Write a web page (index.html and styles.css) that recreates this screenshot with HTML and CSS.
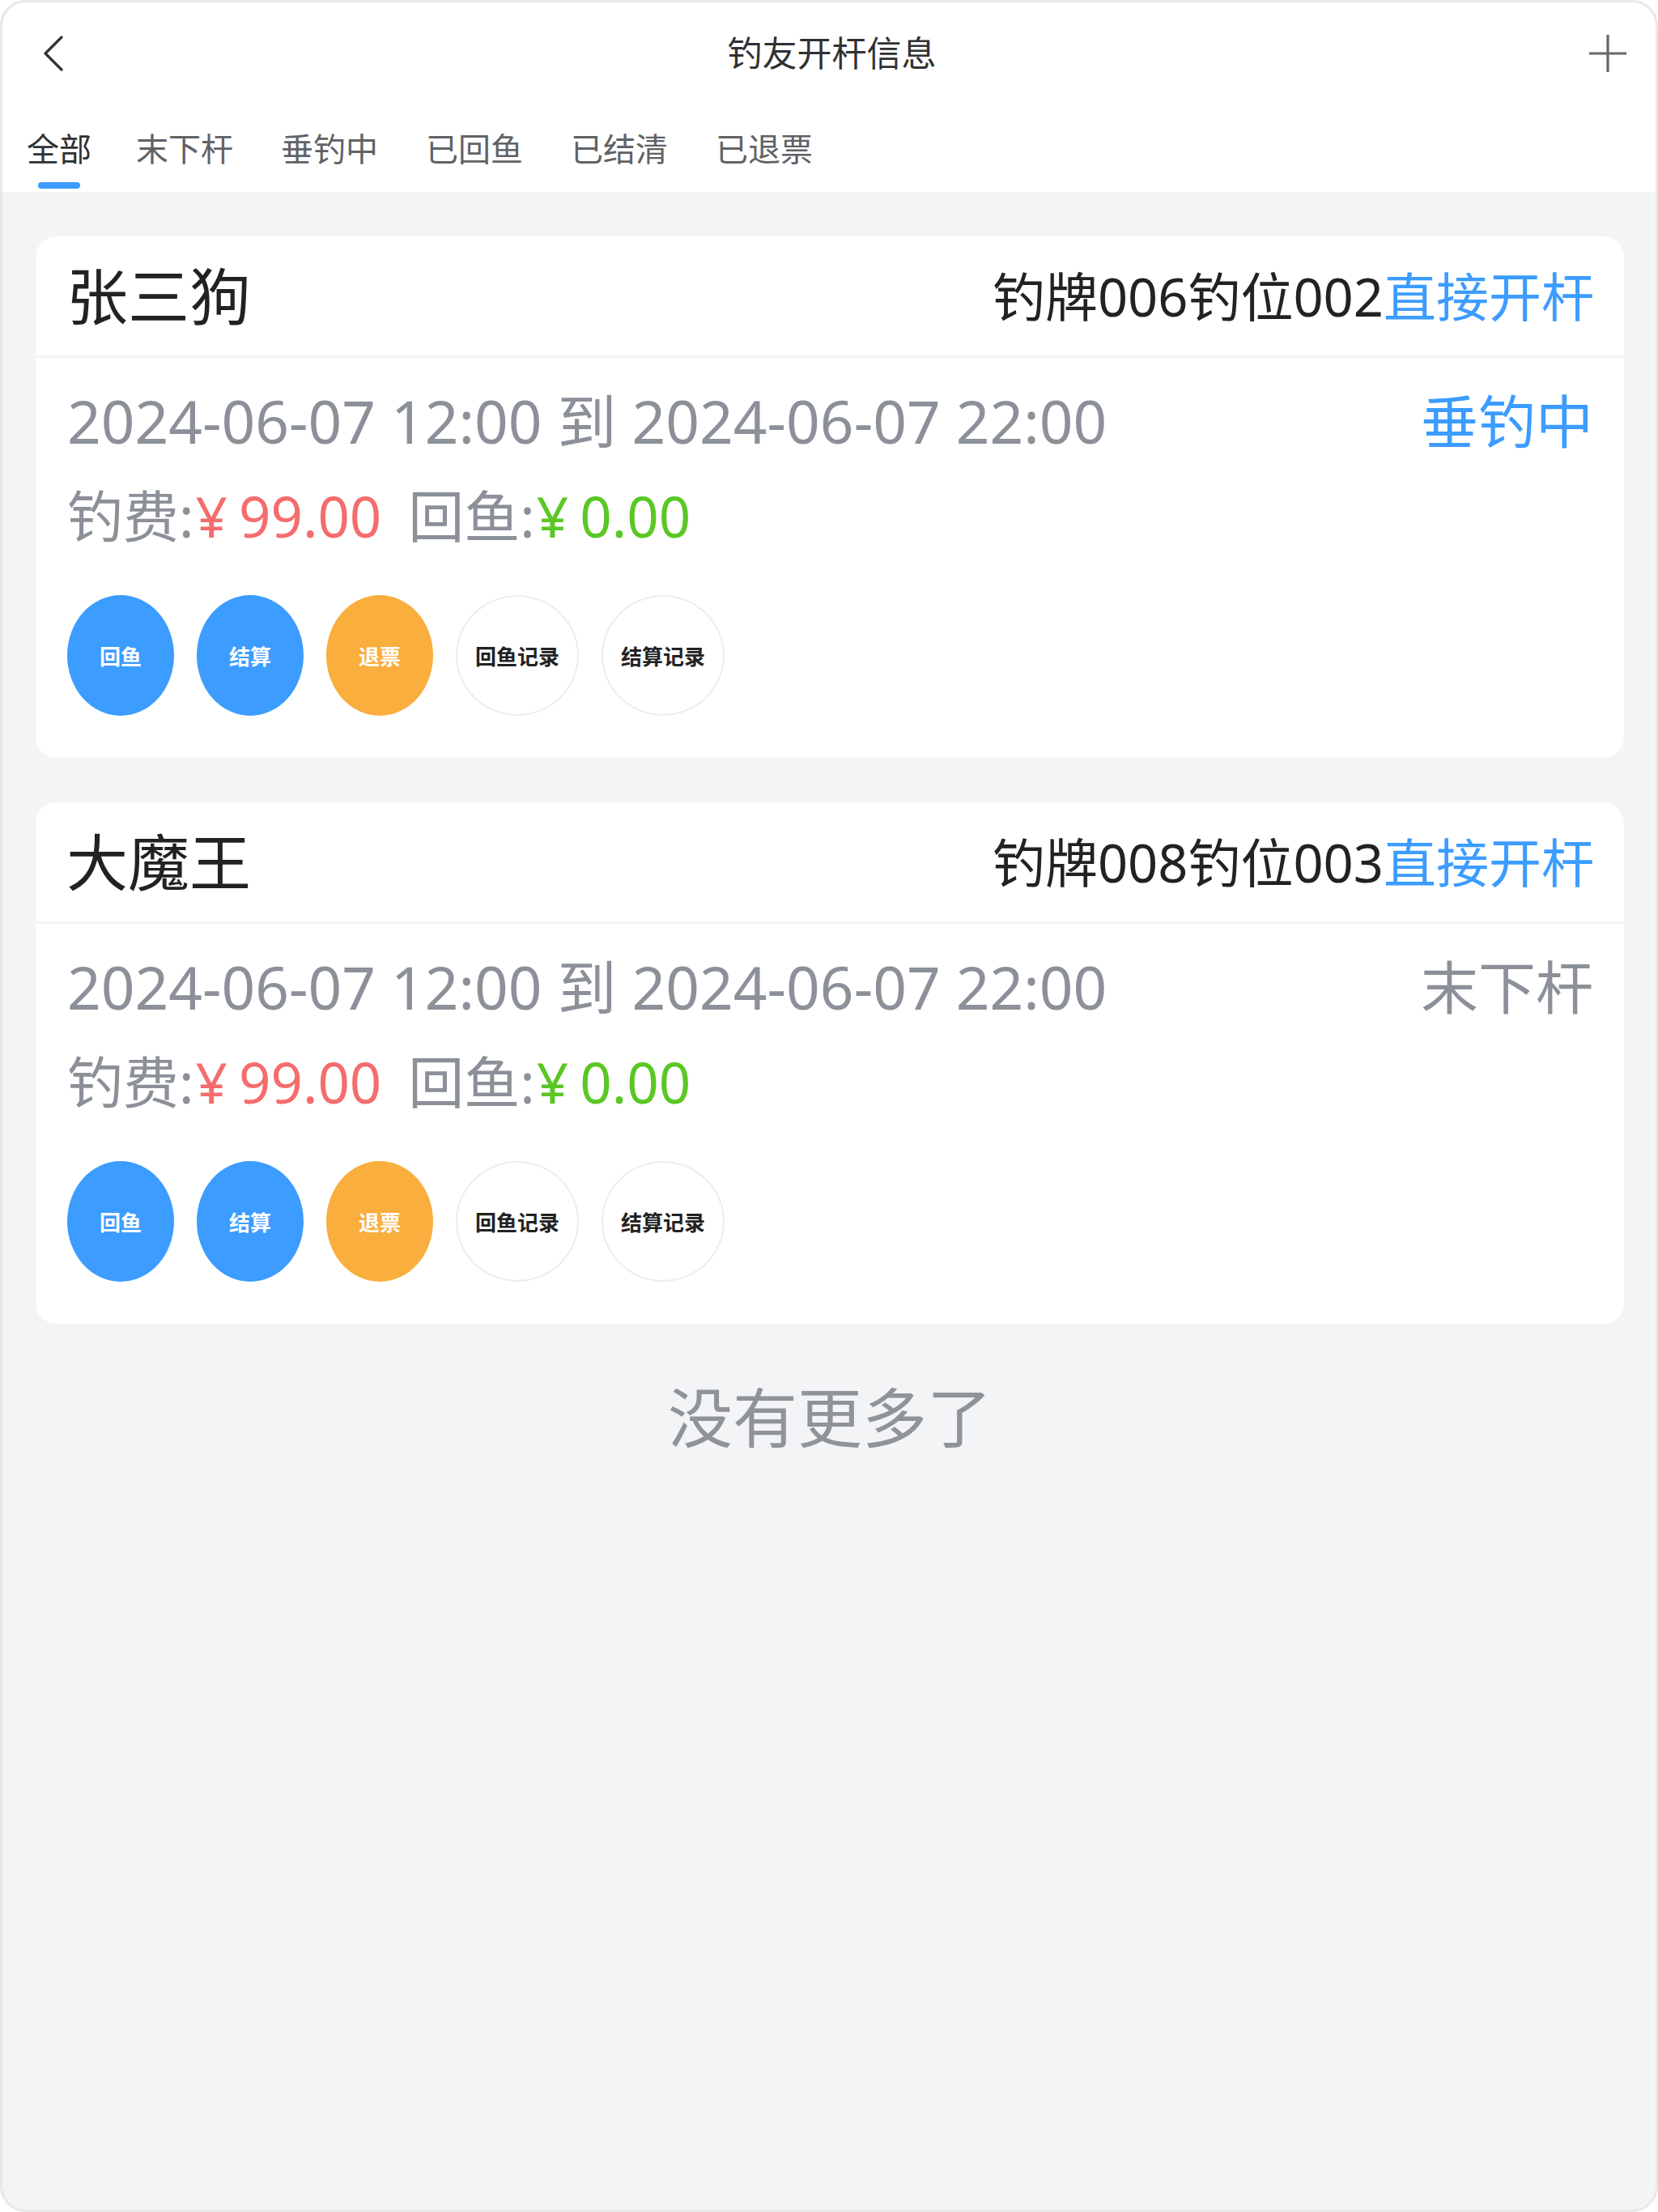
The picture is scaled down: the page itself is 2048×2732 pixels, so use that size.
FILE: index.html
```html
<!DOCTYPE html>
<html lang="zh-CN">
<head>
    <meta charset="UTF-8">
    <meta name="viewport" content="width=device-width, initial-scale=1.0">
    <title>钓友开杆信息</title>
    <link rel="stylesheet" href="styles.css">
</head>
<body>
    <div class="page">
        <div class="top">
            <div class="navbar">
                <div class="nav-left">
                    <svg class="icon-back" viewBox="0 0 26 44" width="26" height="44">
                        <path d="M23 2 L3 22 L23 42" fill="none" stroke="#333" stroke-width="3.2" stroke-linecap="round" stroke-linejoin="round"/>
                    </svg>
                </div>
                <div class="nav-title">钓友开杆信息</div>
                <div class="nav-right">
                    <svg class="icon-plus" viewBox="0 0 48 48" width="48" height="48">
                        <path d="M24 1 V47 M1 24 H47" fill="none" stroke="#666" stroke-width="3.2"/>
                    </svg>
                </div>
            </div>
            <div class="tabs">
                <div class="tab active"><span>全部</span><i class="tab-line"></i></div>
                <div class="tab"><span>末下杆</span><i class="tab-line"></i></div>
                <div class="tab"><span>垂钓中</span><i class="tab-line"></i></div>
                <div class="tab"><span>已回鱼</span><i class="tab-line"></i></div>
                <div class="tab"><span>已结清</span><i class="tab-line"></i></div>
                <div class="tab"><span>已退票</span><i class="tab-line"></i></div>
            </div>
        </div>

        <div class="list">
            <div class="card">
                <div class="card-head">
                    <div class="name">张三狗</div>
                    <div class="seat">钓牌006钓位002<span class="link">直接开杆</span></div>
                </div>
                <div class="card-body">
                    <div class="row">
                        <span class="time">2024-06-07 12:00 到 2024-06-07 22:00</span>
                        <span class="status fishing">垂钓中</span>
                    </div>
                    <div class="fee">钓费:<span class="red"><span class="yen">¥</span>99.00</span><span class="label">回鱼:</span><span class="green"><span class="yen">¥</span>0.00</span></div>
                    <div class="btns">
                        <button class="btn primary">回鱼</button>
                        <button class="btn primary">结算</button>
                        <button class="btn warning">退票</button>
                        <button class="btn plain">回鱼记录</button>
                        <button class="btn plain">结算记录</button>
                    </div>
                </div>
            </div>

            <div class="card">
                <div class="card-head">
                    <div class="name">大魔王</div>
                    <div class="seat">钓牌008钓位003<span class="link">直接开杆</span></div>
                </div>
                <div class="card-body">
                    <div class="row">
                        <span class="time">2024-06-07 12:00 到 2024-06-07 22:00</span>
                        <span class="status">末下杆</span>
                    </div>
                    <div class="fee">钓费:<span class="red"><span class="yen">¥</span>99.00</span><span class="label">回鱼:</span><span class="green"><span class="yen">¥</span>0.00</span></div>
                    <div class="btns">
                        <button class="btn primary">回鱼</button>
                        <button class="btn primary">结算</button>
                        <button class="btn warning">退票</button>
                        <button class="btn plain">回鱼记录</button>
                        <button class="btn plain">结算记录</button>
                    </div>
                </div>
            </div>

            <div class="loadmore">
                <i class="dot-line"></i>
                <span>没有更多了</span>
                <i class="dot-line"></i>
            </div>
        </div>
    </div>
</body>
</html>
```

FILE: styles.css
```css
body {
    margin: 0;
    padding: 0;
    background-color: #ffffff;
    font-family: "Noto Sans", "Noto Sans CJK SC", sans-serif;
    color: #303133;
}

.page {
    box-sizing: border-box;
    height: 2732px;
    border: 3px solid #e8e8e8;
    border-radius: 32px;
    overflow: hidden;
    background-color: #f3f4f6;
}

.top {
    background-color: #ffffff;
}

.navbar {
    display: grid;
    grid-template-columns: 1fr auto 1fr;
    align-items: center;
    height: 125px;
    padding: 0 35px 0 50px;
}

.nav-left,
.nav-right {
    display: flex;
    align-items: center;
}

.nav-right {
    justify-content: flex-end;
}

.icon-back,
.icon-plus {
    display: block;
}

.nav-title {
    font-size: 43px;
    line-height: 50px;
    color: #303133;
    margin-left: -8px;
}

.tabs {
    display: flex;
    gap: 59px;
    height: 109px;
    padding-left: 30px;
}

.tab {
    display: flex;
    flex-direction: column;
    align-items: center;
    padding-top: 36px;
    font-size: 40px;
    line-height: 40px;
    color: #606266;
}

.tab.active {
    color: #303133;
    margin-right: -4px;
}

.tab-line {
    display: block;
    width: 52px;
    height: 8px;
    margin-top: 21px;
    border-radius: 4px;
}

.tab.active .tab-line {
    background-color: #3c9cff;
}

.list {
    padding: 55px 39px 0 41px;
}

.card {
    background-color: #ffffff;
    border-radius: 26px;
    margin-bottom: 55px;
}

.card-head {
    display: flex;
    justify-content: space-between;
    align-items: center;
    height: 147px;
    padding: 0 37px 0 38px;
    border-bottom: 3px solid #f3f4f6;
}

.name {
    font-size: 76px;
    line-height: 90px;
    color: #222222;
}

.seat {
    font-size: 65px;
    line-height: 80px;
    color: #222222;
}

.link {
    color: #3c9cff;
}

.card-body {
    padding: 28px 38px 52px 39px;
}

.row {
    display: flex;
    justify-content: space-between;
    align-items: center;
    line-height: 100px;
    color: #8c9098;
}

.time {
    font-size: 73px;
}

.status {
    font-size: 71px;
    color: #8c9098;
}

.status.fishing {
    color: #3c9cff;
}

.fee {
    margin-top: 17px;
    font-size: 69px;
    line-height: 100px;
    color: #8c9098;
}

.yen {
    margin: 0 14px 0 2px;
}

.label {
    margin-left: 33px;
}

.red {
    color: #f56c6c;
}

.green {
    color: #5ac725;
}

.btns {
    display: flex;
    gap: 28px;
    margin-top: 48px;
}

.btn {
    box-sizing: border-box;
    min-width: 132px;
    height: 149px;
    padding: 0 22px;
    border: 2px solid transparent;
    border-radius: 50%;
    font-family: "Noto Sans CJK SC", sans-serif;
    font-size: 26px;
    font-weight: bold;
    cursor: pointer;
}

.btn.primary {
    background-color: #3c9cff;
    border-color: #3c9cff;
    color: #ffffff;
}

.btn.warning {
    background-color: #f9ae3d;
    border-color: #f9ae3d;
    color: #ffffff;
}

.btn.plain {
    background-color: #ffffff;
    border-color: #ebedf0;
    color: #222222;
}

.loadmore {
    display: flex;
    justify-content: center;
    align-items: center;
    gap: 46px;
    font-size: 80px;
    line-height: 120px;
    color: #909399;
}

.dot-line {
    display: block;
    width: 280px;
    border-top: 2px dotted #f8f8f9;
}
```
